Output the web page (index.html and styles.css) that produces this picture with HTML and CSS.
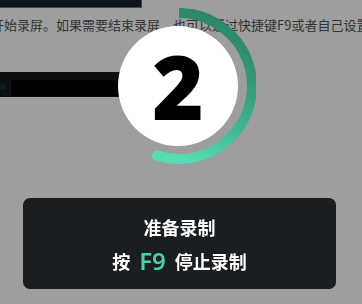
FILE: index.html
```html
<!DOCTYPE html>
<html lang="zh">
<head>
<meta charset="utf-8">
<title>准备录制</title>
<link rel="stylesheet" href="styles.css">
</head>
<body>
<div class="page">
  <div class="topbar"></div>
  <p class="hint">开始录屏。如果需要结束录屏，也可以通过快捷键F9或者自己设置</p>
  <div class="toolbar"><span class="dot"></span><span class="field"></span></div>
</div>
<div class="overlay">
  <div class="countdown">
    <svg class="ring" viewBox="0 0 156 156" width="156" height="156">
      <defs>
        <linearGradient id="g" x1="0.6" y1="0" x2="0.3" y2="1">
          <stop offset="0" stop-color="#2b8468"/>
          <stop offset="0.5" stop-color="#3aa686"/>
          <stop offset="1" stop-color="#56dcb4"/>
        </linearGradient>
      </defs>
      <path d="M79 5 A73 73 0 1 1 57 147.6" fill="none" stroke="url(#g)" stroke-width="10"/>
      <circle cx="57" cy="147.6" r="5" fill="#56dcb4"/>
    </svg>
    <div class="disc">2</div>
  </div>
  <div class="toast">
    <div class="title">准备录制</div>
    <div class="sub">按<span class="key">F9</span>停止录制</div>
  </div>
</div>
</body>
</html>
```
FILE: styles.css
```css
html, body {
  margin: 0;
  padding: 0;
  width: 362px;
  height: 304px;
  overflow: hidden;
  background: #9e9e9e;
  font-family: "Noto Sans", "Noto Sans CJK SC", sans-serif;
}

.page {
  display: flex;
  flex-direction: column;
}

.topbar {
  width: 141px;
  height: 7px;
  background: #10141a;
  border-right: 1px solid #2d4d6e;
  border-bottom: 1px solid #2d4d6e;
}

.hint {
  margin: 10px 0 0 -9px;
  font-family: "Noto Sans CJK SC", sans-serif;
  font-size: 13px;
  line-height: 14px;
  color: #333;
  white-space: nowrap;
}

.toolbar {
  margin-top: 40px;
  width: 150px;
  height: 25px;
  background: #0b1014;
  display: flex;
  align-items: flex-end;
  padding-bottom: 1px;
  box-sizing: border-box;
}

.dot {
  width: 6px;
  height: 6px;
  border-radius: 50%;
  background: #0f1f1d;
  margin: 0 5px 6px 0;
  align-self: flex-end;
}

.field {
  flex: 1;
  height: 16px;
  background: #000;
}

.overlay {
  position: fixed;
  inset: 0;
  display: flex;
  flex-direction: column;
}

.countdown {
  margin: 8px 0 0 100px;
  width: 156px;
  height: 156px;
  display: grid;
  place-items: center;
}

.ring, .disc {
  grid-area: 1 / 1;
}

.disc {
  width: 120px;
  height: 120px;
  border-radius: 50%;
  background: #fff;
  color: #000;
  font-family: "Noto Sans", sans-serif;
  font-weight: 900;
  font-size: 88px;
  line-height: 120px;
  text-align: center;
}

.toast {
  margin: 34px 0 0 23px;
  width: 313px;
  height: 91px;
  box-sizing: border-box;
  padding-top: 19px;
  background: #1b1e21;
  border-radius: 7px;
  display: flex;
  flex-direction: column;
  align-items: center;
  gap: 10px;
  color: #fff;
  font-family: "Noto Sans CJK SC", sans-serif;
  font-weight: 700;
  font-size: 18px;
}

.title {
  line-height: 20px;
}

.sub {
  line-height: 28px;
  display: flex;
  align-items: center;
}

.key {
  margin: 0 9px;
  font-family: "Noto Sans", sans-serif;
  font-weight: 600;
  font-size: 24px;
  color: #47d2a4;
}
```
